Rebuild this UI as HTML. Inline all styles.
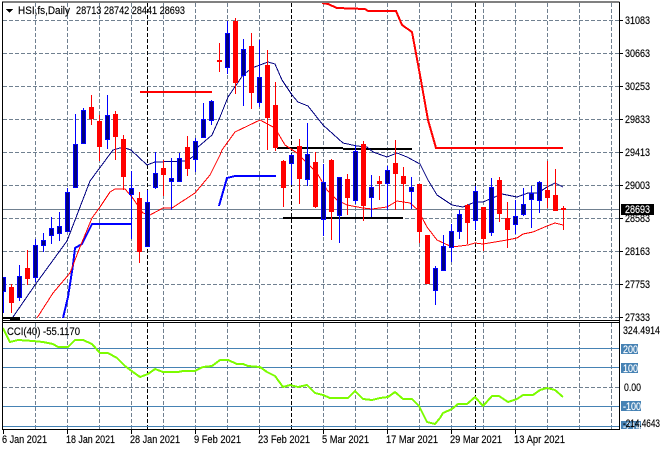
<!DOCTYPE html>
<html><head><meta charset="utf-8"><style>
html,body{margin:0;padding:0;background:#fff}
svg{display:block}
text{font-family:"Liberation Sans",sans-serif;font-size:11px;fill:#000;stroke:#000;stroke-width:.15px}
text.w{fill:#fff;stroke:#fff}
</style></head><body>
<svg width="660" height="450" viewBox="0 0 660 450" xmlns="http://www.w3.org/2000/svg">
<defs><clipPath id="m"><rect x="3" y="3" width="616" height="317"/></clipPath><clipPath id="s"><rect x="3" y="323" width="616" height="106"/></clipPath></defs>
<rect width="660" height="450" fill="#fff"/>
<g shape-rendering="crispEdges" fill="none">
<path stroke="#708090" stroke-dasharray="4 2" d="M3 20.500H619M3 53.500H619M3 86.500H619M3 119.500H619M3 152.500H619M3 185.500H619M3 218.500H619M3 251.500H619M3 284.500H619M3 317.500H619"/>
<path stroke="#708090" stroke-dasharray="4 2" d="M35.500 3V320M67.500 3V320M99.500 3V320M131.500 3V320M163.500 3V320M195.500 3V320M227.500 3V320M259.500 3V320M323.500 3V320M355.500 3V320M387.500 3V320M419.500 3V320M451.500 3V320M483.500 3V320M515.500 3V320M547.500 3V320M579.500 3V320M611.500 3V320"/>
<path stroke="#708090" stroke-dasharray="4 2" d="M35.500 323V429M67.500 323V429M99.500 323V429M131.500 323V429M163.500 323V429M195.500 323V429M227.500 323V429M259.500 323V429M323.500 323V429M355.500 323V429M387.500 323V429M419.500 323V429M451.500 323V429M483.500 323V429M515.500 323V429M547.500 323V429M579.500 323V429M611.500 323V429"/>
<path stroke="#000" stroke-dasharray="4 2" d="M147.500 3V320M291.500 3V320M475.500 3V320M147.500 323V429M291.500 323V429M475.500 323V429"/>
<path stroke="#708090" d="M3 209.500H619"/>
<path stroke="#4682b4" d="M3 348.500H619M3 367.500H619M3 406.500H619M3 426.500H619"/>
<path stroke="#708090" stroke-dasharray="4 2" d="M3 387.500H619"/>
<g clip-path="url(#m)">
<path stroke="#000" stroke-width="2" d="M277 148H343M343 149H412M283 218H403M3 318H20M10 319H20"/>
<path stroke="#f00" stroke-width="2" d="M140 92H212M322 3L328 4L337 8L365 9L368 11L396 11L402 25L412 32L420 75L428 120L436 148H563"/>
<path stroke="#00f" stroke-width="2" d="M63 318L68 297L73 265L75 248L82 244L92 224H131M219 206L227 178L235 176H276"/>
<polyline stroke="#f00" points="37,318 53,293 70,273 80,247 92,218 100,207 110,192 115,189 125,189 132,197 143,213 150,215 163,208 172,208 195,193 210,175 220,155 222,150 235,132 260,120 275,128 285,145 297,153 307,163 317,173 327,190 337,200 347,205 363,208 372,209 387,207 397,201 410,203 418,210 427,227 437,240 452,247 468,245 475,243 483,244 507,240 517,238 523,234 533,232 547,226 555,223 563,225"/>
<polyline stroke="#000080" points="13,317 35,285 67,241 90,181 113,150 120,148 125,148 131,150 147,165 155,162 187,161 195,155 198,147 212,135 220,117 228,97 243,75 252,68 268,62 275,64 282,80 292,95 298,102 308,106 323,125 343,143 357,146 367,147 373,152 387,157 397,153 407,157 420,164 428,180 437,195 452,205 463,207 475,202 483,202 502,194 517,197 528,193 538,193 547,187 555,183 563,187"/>
<path stroke="#00f" d="M3.500 278V313M19.500 265V301M35.500 239V282M43.500 233V252M51.500 217V244M59.500 212V241M67.500 188V232M75.500 114V188M83.500 108V144M107.500 95V149M131.500 171V239M147.500 190V247M155.500 152V189M171.500 158V210M179.500 153V182M195.500 138V172M203.500 103V138M211.500 100V125M227.500 21V74M243.500 39V106M259.500 40V107M291.500 154V185M307.500 123V186M323.500 164V236M339.500 177V243M355.500 145V204M371.500 175V217M387.500 166V210M411.500 177V209M435.500 266V305M443.500 235V271M451.500 224V262M459.500 210V239M475.500 186V230M491.500 178V236M515.500 200V234M523.500 188V216M531.500 186V228M539.500 181V213"/>
<path stroke="#f00" d="M11.500 284V313M27.500 250V285M91.500 95V125M99.500 115V161M115.500 111V160M123.500 135V190M139.500 192V263M163.500 160V196M187.500 136V176M219.500 43V72M235.500 18V94M251.500 33V109M267.500 50V150M275.500 82V151M283.500 160V207M299.500 139V204M315.500 152V208M331.500 159V240M347.500 174V215M363.500 141V221M379.500 176V200M395.500 140V210M403.500 167V210M419.500 184V243M467.500 204V244M483.500 207V251M499.500 177V222M507.500 202V248M547.500 161V208M555.500 169V211M563.500 206V230"/>
<path stroke="#00f" stroke-width="5" d="M3.500 277V292M19.500 276V298M35.500 245V278M43.500 240V246M51.500 228V236M59.500 226V234M67.500 192V232M75.500 144V188M83.500 110V144M107.500 115V140M131.500 188V195M147.500 202V247M155.500 173V188M171.500 178V182M179.500 158V182M195.500 141V160M203.500 119V138M211.500 101V121M227.500 33V68M243.500 49V76M259.500 77V103M291.500 155V164M307.500 154V180M323.500 182V220M339.500 177V216M355.500 151V201M371.500 187V198M387.500 170V184M411.500 187V192M435.500 268V291M443.500 246V271M451.500 231V248M459.500 214V232M475.500 191V221M491.500 187V233M515.500 216V225M523.500 204V215M531.500 193V200M539.500 182V201"/>
<path stroke="#000080" stroke-width="3" d="M3.500 278V291M19.500 277V297M35.500 246V277M43.500 241V245M51.500 229V235M59.500 227V233M67.500 193V231M75.500 145V187M83.500 111V143M107.500 116V139M131.500 189V194M147.500 203V246M155.500 174V187M171.500 179V181M179.500 159V181M195.500 142V159M203.500 120V137M211.500 102V120M227.500 34V67M243.500 50V75M259.500 78V102M291.500 156V163M307.500 155V179M323.500 183V219M339.500 178V215M355.500 152V200M371.500 188V197M387.500 171V183M411.500 188V191M435.500 269V290M443.500 247V270M451.500 232V247M459.500 215V231M475.500 192V220M491.500 188V232M515.500 217V224M523.500 205V214M531.500 194V199M539.500 183V200"/>
<path stroke="#f00" stroke-width="5" d="M11.500 287V303M27.500 268V279M91.500 107V119M99.500 121V147M115.500 114V137M123.500 139V177M139.500 198V252M163.500 168V175M187.500 147V169M219.500 60V62M235.500 21V83M251.500 46V93M267.500 65V118M275.500 105V148M283.500 161V188M299.500 146V179M315.500 162V207M331.500 160V212M347.500 179V198M363.500 144V206M379.500 181V184M395.500 163V174M403.500 176V184M419.500 184V232M427.500 235V284M467.500 205V223M483.500 207V239M499.500 180V214M507.500 218V230M547.500 190V198M555.500 195V211M563.500 208V210"/>
</g>
<g clip-path="url(#s)">
<polyline stroke="#7cfc00" stroke-width="2" points="3,328 10,342 18,340 33,341 43,342 53,344 58,347 68,347 75,340 83,340 92,344 100,353 108,353 117,358 125,366 133,372 140,377 148,374 155,369 163,372 178,372 183,371 195,371 203,367 212,366 220,360 228,360 237,364 243,364 248,366 260,367 267,372 275,376 283,387 290,385 298,387 307,385 315,393 323,395 330,398 348,398 355,391 363,399 372,400 380,398 388,397 395,392 403,399 412,399 419,406 427,422 435,424 440,418 443,413 452,409 458,404 467,404 475,397 483,406 492,396 499,396 508,402 517,399 523,395 533,395 540,390 547,388 555,390 563,397"/>
</g>
<path stroke="#000" d="M2 2H619.500M2.500 2V429.500M619.500 2V429.500M2 320.500H620M2 322.500H620M2 429.500H620"/>
<path stroke="#000" d="M619 20.500H623M619 53.500H623M619 86.500H623M619 119.500H623M619 152.500H623M619 185.500H623M619 218.500H623M619 251.500H623M619 284.500H623M619 317.500H623"/>
<path stroke="#000" d="M3.500 430V434M67.500 430V434M131.500 430V434M195.500 430V434M259.500 430V434M323.500 430V434M387.500 430V434M451.500 430V434M515.500 430V434"/>
<path fill="#000" stroke="none" d="M6 9H13L9.500 13Z"/>
<rect x="621" y="344" width="17" height="10" fill="#4682b4"/>
<rect x="621" y="363" width="17" height="10" fill="#4682b4"/>
<rect x="621" y="401" width="20" height="10" fill="#4682b4"/>
<rect x="621" y="421" width="20" height="8" fill="#4682b4"/>
</g>
<text x="18" y="14" textLength="52" lengthAdjust="spacingAndGlyphs">HSI,fs,Daily</text>
<text x="76" y="14" textLength="109" lengthAdjust="spacingAndGlyphs">28713 28742 28441 28693</text>
<text x="7" y="335" textLength="73" lengthAdjust="spacingAndGlyphs">CCI(40) -55.1170</text>
<text x="625" y="24" textLength="25" lengthAdjust="spacingAndGlyphs">31083</text>
<text x="625" y="57" textLength="25" lengthAdjust="spacingAndGlyphs">30663</text>
<text x="625" y="90" textLength="25" lengthAdjust="spacingAndGlyphs">30253</text>
<text x="625" y="123" textLength="25" lengthAdjust="spacingAndGlyphs">29833</text>
<text x="625" y="156" textLength="25" lengthAdjust="spacingAndGlyphs">29413</text>
<text x="625" y="189" textLength="25" lengthAdjust="spacingAndGlyphs">29003</text>
<text x="625" y="222" textLength="25" lengthAdjust="spacingAndGlyphs">28583</text>
<text x="625" y="255" textLength="25" lengthAdjust="spacingAndGlyphs">28163</text>
<text x="625" y="288" textLength="25" lengthAdjust="spacingAndGlyphs">27753</text>
<text x="625" y="321" textLength="25" lengthAdjust="spacingAndGlyphs">27333</text>
<rect x="621" y="204" width="33" height="11" fill="#000"/>
<text class="w" x="625" y="213" textLength="25" lengthAdjust="spacingAndGlyphs">28693</text>
<text x="623" y="334" textLength="37" lengthAdjust="spacingAndGlyphs">324.4914</text>
<text class="w" x="623" y="353" textLength="15" lengthAdjust="spacingAndGlyphs">200</text>
<text class="w" x="623" y="372" textLength="15" lengthAdjust="spacingAndGlyphs">100</text>
<text x="624" y="391" textLength="17" lengthAdjust="spacingAndGlyphs">0.00</text>
<text class="w" x="623" y="410" textLength="18" lengthAdjust="spacingAndGlyphs">-100</text>
<text class="w" x="623" y="430" textLength="18" lengthAdjust="spacingAndGlyphs">-214</text>
<rect x="600" y="430" width="60" height="4" fill="#fff"/>
<path stroke="#000" shape-rendering="crispEdges" d="M611.500 429.500H620"/>
<text x="623" y="427" textLength="37" lengthAdjust="spacingAndGlyphs">-214.4643</text>
<text x="2" y="443" textLength="45" lengthAdjust="spacingAndGlyphs">6 Jan 2021</text>
<text x="66" y="443" textLength="49" lengthAdjust="spacingAndGlyphs">18 Jan 2021</text>
<text x="130" y="443" textLength="50" lengthAdjust="spacingAndGlyphs">28 Jan 2021</text>
<text x="194" y="443" textLength="47" lengthAdjust="spacingAndGlyphs">9 Feb 2021</text>
<text x="258" y="443" textLength="52" lengthAdjust="spacingAndGlyphs">23 Feb 2021</text>
<text x="322" y="443" textLength="47" lengthAdjust="spacingAndGlyphs">5 Mar 2021</text>
<text x="386" y="443" textLength="52" lengthAdjust="spacingAndGlyphs">17 Mar 2021</text>
<text x="450" y="443" textLength="52" lengthAdjust="spacingAndGlyphs">29 Mar 2021</text>
<text x="514" y="443" textLength="51" lengthAdjust="spacingAndGlyphs">13 Apr 2021</text>
</svg>
</body></html>
